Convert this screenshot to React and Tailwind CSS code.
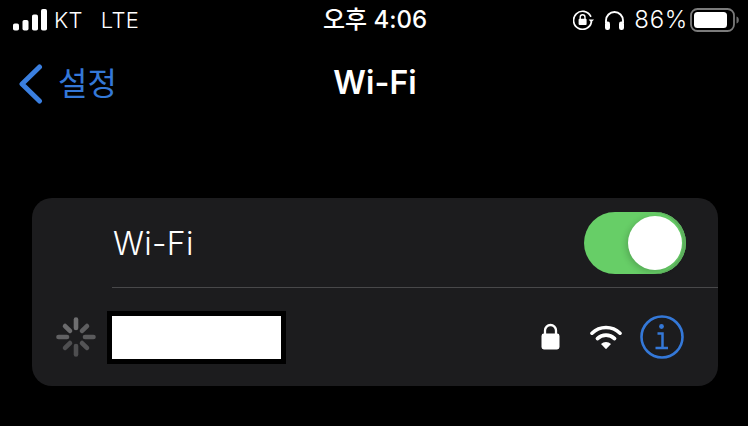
const sans = { fontFamily: 'Inter, "Noto Sans CJK KR", sans-serif' };

function Signal() {
  return (
    <svg width="34" height="22" viewBox="0 0 34 22" className="block">
      <rect x="0" y="14.5" width="6" height="7" rx="1.8" fill="#fff" />
      <rect x="9.5" y="11" width="6" height="10.5" rx="1.8" fill="#fff" />
      <rect x="19" y="5.5" width="6" height="16" rx="1.8" fill="#fff" />
      <rect x="28" y="0" width="6" height="21.5" rx="1.8" fill="#fff" />
    </svg>
  );
}

function RotationLock() {
  return (
    <svg width="22" height="20" viewBox="0 0 22 20" className="block">
      <path d="M17.6 6.2A9 9 0 1 0 18.4 12" fill="none" stroke="#fff" strokeWidth="1.7" strokeLinecap="round" />
      <path d="M15.6 9.4h5.4l-2.7 3.2z" fill="#fff" />
      <rect x="5.6" y="8.7" width="8" height="6.2" rx="1" fill="#fff" />
      <path d="M7.2 8.9V7.2a2.4 2.4 0 0 1 4.8 0v1.7" fill="none" stroke="#fff" strokeWidth="1.4" />
    </svg>
  );
}

function Headphones() {
  return (
    <svg width="21" height="20" viewBox="0 0 21 20" className="block">
      <path d="M2 13V10.5a8.5 8.5 0 0 1 17 0V13" fill="none" stroke="#fff" strokeWidth="1.9" />
      <rect x="1" y="11.5" width="5" height="8.5" rx="2.2" fill="#fff" />
      <rect x="15" y="11.5" width="5" height="8.5" rx="2.2" fill="#fff" />
    </svg>
  );
}

function Battery() {
  return (
    <svg width="49" height="24" viewBox="0 0 49 24" className="block">
      <rect x="1" y="1" width="43" height="22" rx="6.5" fill="none" stroke="#7b7b7b" strokeWidth="1.8" />
      <rect x="4" y="4" width="33" height="16" rx="3.5" fill="#fff" />
      <path d="M46.5 8.5c1.6.4 2.3 1.8 2.3 3.5s-.7 3.1-2.3 3.5z" fill="#6f6f6f" />
    </svg>
  );
}

function Spinner() {
  const spokes = [
    [0, "#6e6e70"], [45, "#5e5e60"], [90, "#5a5a5c"], [135, "#545456"],
    [180, "#4e4e50"], [225, "#4e4e50"], [270, "#616163"], [315, "#6a6a6c"],
  ];
  return (
    <svg width="40" height="40" viewBox="0 0 40 40" className="block">
      {spokes.map(([a, c]) => (
        <line key={a} x1="20" y1={a % 90 === 0 ? 2.5 : 4.5} x2="20" y2={a % 90 === 0 ? 11 : 11.5} stroke={c} strokeWidth="4.6" strokeLinecap="round" transform={`rotate(${a} 20 20)`} />
      ))}
    </svg>
  );
}

function Lock() {
  return (
    <svg width="19" height="27" viewBox="0 0 19 27" className="block">
      <rect x="0.5" y="10.5" width="18" height="16" rx="2.4" fill="#fff" />
      <path d="M4 11V7.5a5.5 5.5 0 0 1 11 0V11" fill="none" stroke="#fff" strokeWidth="2.3" />
    </svg>
  );
}

function Wifi() {
  return (
    <svg width="32" height="24" viewBox="0 0 32 24" className="block">
      <path d="M2 8.2a20 20 0 0 1 28 0" fill="none" stroke="#fff" strokeWidth="3.6" strokeLinecap="round" />
      <path d="M7.4 13.6a12.4 12.4 0 0 1 17.2 0" fill="none" stroke="#fff" strokeWidth="3.6" strokeLinecap="round" />
      <path d="M11 19a7.2 7.2 0 0 1 10 0l-5 5.2z" fill="#fff" />
    </svg>
  );
}

function Info() {
  return (
    <svg width="44" height="44" viewBox="0 0 44 44" className="block">
      <circle cx="22" cy="22" r="20.5" fill="none" stroke="#3478d8" strokeWidth="2.6" />
      <circle cx="21.5" cy="11.5" r="2.4" fill="#3478d8" />
      <path d="M17.5 18.5h5v14M15.5 33h12.5" fill="none" stroke="#3478d8" strokeWidth="2.5" />
    </svg>
  );
}

export default function App() {
  return (
    <div className="w-[748px] h-[426px] bg-black text-white overflow-hidden flex flex-col" style={sans}>
      <div className="relative h-[40px] shrink-0 flex items-center justify-between pl-[13px] pr-[9px]">
        <div className="flex items-center gap-[7px]">
          <Signal />
          <span className="text-[22px] font-light leading-none flex gap-[18px] tracking-[0.3px]">
            <span>KT</span>
            <span>LTE</span>
          </span>
        </div>
        <span className="absolute left-[323px] top-[5px] text-[24px] font-medium leading-[30px]">오후 4:06</span>
        <div className="flex items-center">
          <RotationLock />
          <div className="w-[9px]" />
          <Headphones />
          <span className="ml-[9px] mr-[2px] text-[24px] font-light leading-none tracking-[0.7px]">86%</span>
          <Battery />
        </div>
      </div>

      <div className="relative h-[88px] shrink-0 flex items-center justify-center pb-[2px]">
        <div className="absolute left-[18px] top-[24px] flex items-center gap-[15px] text-[#3478d8]">
          <svg width="25" height="40" viewBox="0 0 25 40" className="block">
            <path d="M21.5 3 4 20l17.5 17" fill="none" stroke="#3a7fe0" strokeWidth="5" strokeLinecap="round" strokeLinejoin="round" />
          </svg>
          <span className="text-[32px] leading-none">설정</span>
        </div>
        <span className="text-[32px] font-semibold leading-none tracking-[0.1px] -mt-[1px] ml-[2px]">Wi-Fi</span>
      </div>

      <div className="mt-[70px] ml-[32px] mr-[30px] h-[188px] bg-[#1c1c1e] rounded-[20px] flex flex-col overflow-hidden">
        <div className="relative h-[90px] shrink-0 ml-[80px] flex items-center justify-between border-b border-[#48484a] pr-[32px] pt-[1px]">
          <span className="text-[32px] font-light leading-none tracking-[0.3px] mt-[2px] ml-[1px]">Wi-Fi</span>
          <div className="w-[102px] h-[62px] rounded-full bg-[#67ce67] flex items-center justify-end pr-[4px] shadow-[inset_-3px_0_0_#5fb35f]">
            <div className="w-[54px] h-[54px] rounded-full bg-white shadow-[-2px_2px_6px_rgba(0,0,0,0.18)]" />
          </div>
        </div>
        <div className="flex-1 flex items-center pl-[24px]">
          <Spinner />
          <div className="ml-[11px] w-[179px] h-[53px] bg-white border-[5px] border-black" />
          <div className="ml-[255px] -mt-[2px]"><Lock /></div>
          <div className="ml-[30px]"><Wifi /></div>
          <div className="ml-[18px]"><Info /></div>
        </div>
      </div>
    </div>
  );
}
